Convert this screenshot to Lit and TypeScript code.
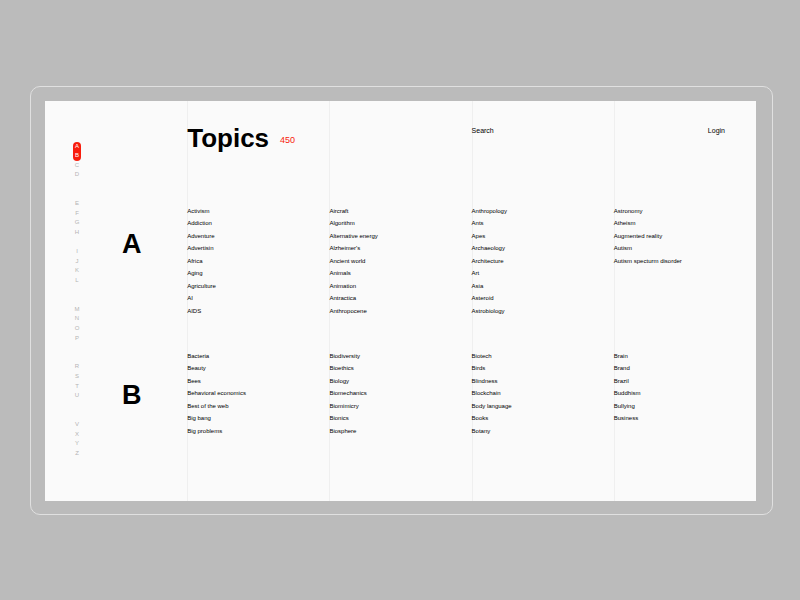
import { LitElement, html, css } from "lit";
import { customElement } from "lit/decorators.js";
import { classMap } from "lit/directives/class-map.js";
import { styleMap } from "lit/directives/style-map.js";

interface TopicGroup {
  letter: string;
  columns: string[][];
}

const GROUPS: TopicGroup[] = [
  {
    letter: "A",
    columns: [
      ["Activism", "Addiction", "Adventure", "Advertisin", "Africa", "Aging", "Agriculture", "AI", "AIDS"],
      ["Aircraft", "Algorithm", "Alternative energy", "Alzheimer's", "Ancient world", "Animals", "Animation", "Antractica", "Anthropocene"],
      ["Anthropology", "Ants", "Apes", "Archaeology", "Architecture", "Art", "Asia", "Asteroid", "Astrobiology"],
      ["Astronomy", "Atheism", "Augmented reality", "Autism", "Autism specturm disorder"],
    ],
  },
  {
    letter: "B",
    columns: [
      ["Bacteria", "Beauty", "Bees", "Behavioral economics", "Best of the web", "Big bang", "Big problems"],
      ["Biodiversity", "Bioethics", "Biology", "Biomechanics", "Biomimicry", "Bionics", "Biosphere"],
      ["Biotech", "Birds", "Blindness", "Blockchain", "Body language", "Books", "Botany"],
      ["Brain", "Brand", "Brazil", "Buddhism", "Bullying", "Business"],
    ],
  },
];

// A space is an empty slot between groups of letters.
const INDEX = "ABCD  EFGH IJKL  MNOP  RSTU  VXYZ";

@customElement("topic-section")
export class TopicSection extends LitElement {
  static properties = { group: { attribute: false } };
  declare group: TopicGroup;

  static styles = css`
    :host {
      display: grid;
      grid-template-columns: repeat(5, minmax(0, 1fr));
    }
    .letter {
      margin: 25px 0 0 77px;
      font-size: 27px;
      line-height: 28px;
      font-weight: 700;
      color: #000;
    }
    .short {
      margin-top: 31px;
    }
    .list {
      display: grid;
      margin: 0;
      padding: 0;
      list-style: none;
      font-size: 6px;
      line-height: 12px;
      white-space: nowrap;
    }
    .topic {
      color: #000;
      text-decoration: none;
    }
    .topic:hover {
      color: #f81c0c;
    }
  `;

  render() {
    const { letter, columns } = this.group;
    const rows = Math.max(...columns.map((c) => c.length));
    const size = {
      height: `${Math.round(rows * 12.58)}px`,
      gridTemplateRows: `repeat(${rows}, 1fr)`,
    };
    return html`
      <h2 class=${classMap({ letter: true, short: rows < 9 })}>${letter}</h2>
      ${columns.map(
        (topics) => html`<ul class="list" style=${styleMap(size)}>
          ${topics.map((t) => html`<li><a class="topic" href="#">${t}</a></li>`)}
        </ul>`
      )}
    `;
  }
}

@customElement("app-root")
export class AppRoot extends LitElement {
  static styles = css`
    :host {
      display: flex;
      align-items: center;
      box-sizing: border-box;
      min-height: 100vh;
      padding: 24px 27px 24px 30px;
      background: #bbb;
      color: #000;
      font-family: "Liberation Sans", Arial, Helvetica, sans-serif;
    }
    .frame {
      flex: 1;
      min-width: 0;
      padding: 14px 16px 13px 14px;
      border: 1px solid #e0e0e0;
      border-radius: 10px;
    }
    .panel {
      display: grid;
      grid-template-columns: repeat(5, minmax(0, 1fr));
      grid-template-rows: 104px auto;
      background: #fafafa;
    }
    .rule {
      grid-row: 1 / 3;
      border-left: 1px solid #efefef;
    }
    .r1 { grid-column: 2; }
    .r2 { grid-column: 3; }
    .r3 { grid-column: 4; }
    .r4 { grid-column: 5; }
    .index {
      grid-area: 1 / 1 / 3 / 2;
      display: grid;
      grid-template-rows: repeat(33, minmax(0, 1fr));
      width: 8px;
      height: 317px;
      margin: 41px 0 0 28px;
      z-index: 1;
      font-size: 6px;
      line-height: 9px;
      text-align: center;
    }
    .key {
      color: #b4b4b4;
      text-decoration: none;
    }
    .active {
      background: #f81c0c;
      color: #fff;
    }
    .first {
      border-radius: 4px 4px 0 0;
    }
    .last {
      border-radius: 0 0 4px 4px;
    }
    .header {
      grid-area: 1 / 2 / 2 / 6;
      display: grid;
      grid-template-columns: repeat(4, minmax(0, 1fr));
      align-items: start;
    }
    .heading {
      grid-column: 1 / 3;
      display: flex;
      align-items: center;
      gap: 11px;
      padding-top: 21px;
    }
    .title {
      margin: 0;
      font-size: 26px;
      line-height: 32px;
      font-weight: 700;
      color: #000;
    }
    .count {
      padding-top: 5px;
      font-size: 9px;
      line-height: 12px;
      color: #f81c0c;
    }
    .action {
      justify-self: start;
      margin: 24px 0 0;
      padding: 0;
      border: 0;
      background: none;
      font: inherit;
      font-size: 7px;
      line-height: 12px;
      color: #000;
      text-decoration: none;
      cursor: pointer;
    }
    .login {
      justify-self: end;
      margin-right: 31px;
    }
    .topics {
      grid-area: 2 / 1 / 3 / 6;
      display: grid;
      gap: 32px;
      padding-bottom: 63px;
    }
  `;

  render() {
    return html`
      <div class="frame">
        <main class="panel">
          ${[1, 2, 3, 4].map((n) => html`<div class="rule r${n}"></div>`)}
          <nav class="index" aria-label="Topics by letter">
            ${[...INDEX].map((ch, i) =>
              ch === " "
                ? ""
                : html`<a
                    href="#"
                    class=${classMap({ key: true, active: i < 2, first: i === 0, last: i === 1 })}
                    style=${styleMap({ gridRow: `${i + 1}` })}
                    >${ch}</a
                  >`
            )}
          </nav>
          <header class="header">
            <div class="heading">
              <h1 class="title">Topics</h1>
              <span class="count">450</span>
            </div>
            <button class="action" type="button">Search</button>
            <a class="action login" href="#">Login</a>
          </header>
          <div class="topics">
            ${GROUPS.map((g) => html`<topic-section .group=${g}></topic-section>`)}
          </div>
        </main>
      </div>
    `;
  }
}
